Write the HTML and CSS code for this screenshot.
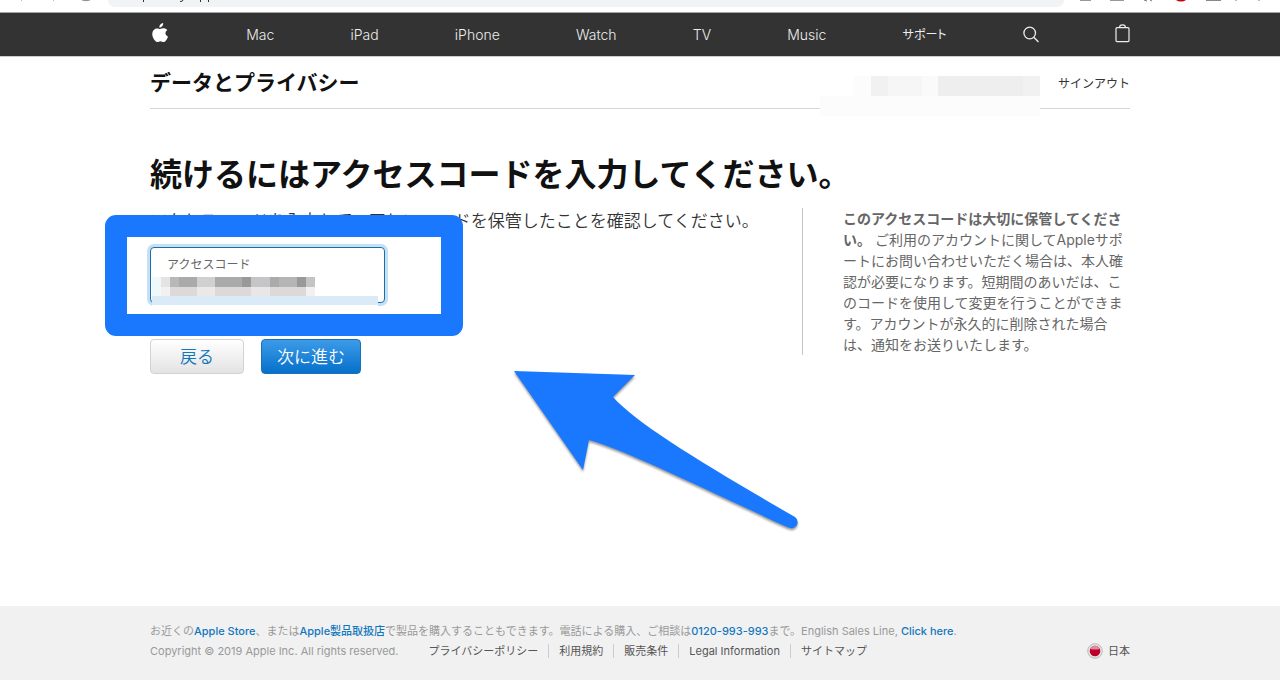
FILE: index.html
```html
<!DOCTYPE html>
<html lang="ja">
<head>
<meta charset="utf-8">
<meta name="viewport" content="width=device-width, initial-scale=1">
<title>データとプライバシー</title>
<link rel="stylesheet" href="styles.css">
</head>
<body>
<div class="browser-bar">
  <div class="browser-nav">
    <svg width="90" height="3" viewBox="0 0 90 3" aria-hidden="true"><path d="M21 0l1 1M54 0l-1 1" stroke="#bbb" fill="none"/><path d="M82 0q4 1.500 8 0" stroke="#888" fill="none"/></svg>
  </div>
  <div class="address">
    <svg width="110" height="4" viewBox="0 0 110 4" aria-hidden="true"><path d="M35.500 0v2M72 1.500q3 0 3-1.500M92.500 0v2M100.500 0v2" stroke="#333" fill="none"/></svg>
  </div>
  <div class="browser-tools">
    <svg width="200" height="4" viewBox="0 0 200 4" aria-hidden="true"><path d="M12 .5h11M42 .5h14" stroke="#999"/><path d="M76 0l3 1M82 0l2 1" stroke="#777"/><path d="M108 0h10q-2 1.500-5 1.500T108 0z" fill="#c00"/><path d="M138 .5h15" stroke="#888"/><path d="M168 0v1M191 0v1" stroke="#777"/></svg>
  </div>
</div>
<nav class="global-nav" aria-label="グローバル">
  <ul class="nav-list wrap">
    <li><a href="#" aria-label="Apple"><svg class="apple" width="20" height="44" viewBox="0 0 20 44"><path fill="#fff" d="M13.200 10q.2 1.900-1 3.200-1.100 1.400-2.900 1.400-.2-1.800 1-3.100Q11.500 10.200 13.200 10zM17.300 17q-2 1.200-1.900 3.300.1 2.500 2.600 3.500-.8 2.200-2.200 4-.9 1.300-2.200 1.300-.7 0-1.500-.4-1.700-.7-3.300 0-.8.400-1.500.4-1.200 0-2.400-1.600C2 24 1.600 20.100 3.300 17.500c1.500-2.200 3.800-2.500 5.600-1.700q.8.400 1.600 0C12.900 14.700 15.800 15.100 17.300 17z"/></svg></a></li>
    <li><a href="#">Mac</a></li>
    <li><a href="#">iPad</a></li>
    <li><a href="#">iPhone</a></li>
    <li><a href="#">Watch</a></li>
    <li><a href="#">TV</a></li>
    <li><a href="#">Music</a></li>
    <li><a href="#" class="support">サポート</a></li>
    <li><a href="#" aria-label="検索"><svg width="16" height="44" viewBox="0 0 16 44" fill="none" stroke="#eee" stroke-width="1.300"><circle cx="6.700" cy="20" r="5.800"/><path d="M10.800 24.200L15.500 29"/></svg></a></li>
    <li><a href="#" aria-label="ショッピングバッグ"><svg width="15" height="44" viewBox="0 0 15 44" fill="none" stroke="#eee" stroke-width="1.200"><rect x="1" y="14.600" width="13" height="14" rx="1"/><path d="M4.500 14.600Q4.500 11.800 7.500 11.800t3 2.800"/></svg></a></li>
  </ul>
</nav>
<header class="page-head wrap">
  <h2 class="page-title">データとプライバシー</h2>
  <a href="#" class="sign-out">サインアウト</a>
  <svg class="account-mask" width="220" height="40" viewBox="0 0 220 40" aria-hidden="true"><path fill="#fff" d="M0 0h220v40H0z"/><path fill="#fcfcfc" d="M34 0h186v40H0V20h34z"/><path fill="#f1f1f1" d="M51 0h17v20H51z"/><path fill="#f6f6f6" d="M68 0h34v20H68z"/><path fill="#fafafa" d="M102 0h16v20h-16z"/><path fill="#eee" d="M118 0h85v20h-85z"/><path fill="#f1f1f1" d="M203 0h17v20h-17z"/></svg>
</header>
<main class="content wrap">
  <h1 class="heading">続けるにはアクセスコードを入力してください。</h1>
  <div class="columns">
    <form class="code-form" onsubmit="return false">
      <p class="lead">アクセスコードを入力して、正しいコードを保管したことを確認してください。</p>
      <div class="field">
        <label for="code">アクセスコード</label>
        <input id="code" type="text" autocomplete="off">
        <svg class="code-mask" width="228" height="31" viewBox="0 0 228 31" aria-hidden="true" shape-rendering="crispEdges"><path fill="#fff" d="M0 0h226v31H0z"/><path fill="#eff8fb" d="M0 0h9v20H0z"/><path fill="#e4e4e4" d="M9 0h9v10H9z"/><path fill="#b8b8b8" d="M18 0h9v10h-9z"/><path fill="#aaa" d="M27 0h18v10H27z"/><path fill="#d0d0d0" d="M45 0h18v10H45z"/><path fill="#aaa" d="M63 0h27v10H63z"/><path fill="#999" d="M90 0h9v10h-9z"/><path fill="#c5c5c8" d="M99 0h19v10H99z"/><path fill="#aaa" d="M118 0h9v10h-9z"/><path fill="#b5b5b5" d="M127 0h18v10h-18z"/><path fill="#999" d="M145 0h9v10h-9z"/><path fill="#c4c4c4" d="M154 0h9v10h-9z"/><path fill="#f2f0f0" d="M9 10h9v9H9z"/><path fill="#dcd9d8" d="M18 10h27v9H18z"/><path fill="#ebe9e8" d="M45 10h18v9H45z"/><path fill="#dcd9d8" d="M63 10h36v9H63z"/><path fill="#e8e6e6" d="M99 10h19v9H99z"/><path fill="#dcd9d8" d="M118 10h36v9h-36z"/><path fill="#f2f0f0" d="M154 10h9v9h-9z"/><path fill="#daebf7" d="M0 19h226v9H0z"/></svg>
      </div>
      <div class="actions">
        <button type="button" class="btn btn-back">戻る</button>
        <button type="submit" class="btn btn-next">次に進む</button>
      </div>
    </form>
    <aside class="note"><strong>このアクセスコードは大切に保管してください。</strong> ご利用のアカウントに関してAppleサポートにお問い合わせいただく場合は、本人確認が必要になります。短期間のあいだは、このコードを使用して変更を行うことができます。アカウントが永久的に削除された場合は、通知をお送りいたします。</aside>
  </div>
  <div class="highlight" aria-hidden="true"></div>
  <svg class="arrow" width="290" height="164" viewBox="0 0 290 164" aria-hidden="true"><path fill="#1a78ff" d="M4 1L125 5 103 27C127 54 195 95 285 147Q289 150 287 155 284 160 277 157C198 121 118 81 79 70L73 100z"/></svg>
</main>
<footer class="site-footer">
  <div class="wrap">
    <p class="shop">お近くの<a href="#">Apple Store</a>、または<a href="#">Apple製品取扱店</a>で製品を購入することもできます。電話による購入、ご相談は<a href="#">0120-993-993</a>まで。English Sales Line, <a href="#">Click here</a>.</p>
    <div class="legal">
      <span class="copyright">Copyright © 2019 Apple Inc. All rights reserved.</span>
      <ul class="legal-links">
        <li><a href="#">プライバシーポリシー</a></li>
        <li><a href="#">利用規約</a></li>
        <li><a href="#">販売条件</a></li>
        <li><a href="#">Legal Information</a></li>
        <li><a href="#">サイトマップ</a></li>
      </ul>
      <a href="#" class="region"><svg width="16" height="16" viewBox="0 0 16 16" aria-hidden="true"><circle cx="8" cy="8" r="7.300" fill="#e4e4e4" stroke="#bbb"/><circle cx="8" cy="8" r="5.300" fill="#bd0029"/><path d="M3.200 6Q4.500 2.700 8 2.700T12.800 6Q8 7 3.200 6z" fill="#dd8b9a"/></svg>日本</a>
    </div>
  </div>
</footer>
</body>
</html>
```
FILE: styles.css
```css
* { box-sizing: border-box; }
body {
  margin: 0;
  min-height: 100vh;
  display: flex;
  flex-direction: column;
  background: #fff;
  color: #111;
  font-family: Inter, "Noto Sans CJK JP", sans-serif;
}
a { color: inherit; text-decoration: none; }
ul { list-style: none; margin: 0; padding: 0; }
svg { display: block; }
.wrap { width: 100%; max-width: 980px; margin: 0 auto; }

.browser-bar {
  display: grid;
  grid-template-columns: 108px 1fr 216px;
  height: 13px;
  border-bottom: 1px solid #a5a5a5;
}
.address { height: 7px; background: #f1f3f4; border-radius: 0 0 14px 14px; }
.browser-tools { padding-left: 4px; }

.global-nav { background: #333; border-bottom: 1px solid #ccc; }
.nav-list { display: flex; justify-content: space-between; align-items: center; height: 43px; }
.nav-list a { display: block; color: #eee; font-size: 14px; font-weight: 300; line-height: 43px; }
.nav-list .support { font-size: 12px; font-weight: 400; font-feature-settings: "palt"; }

.page-head {
  position: relative;
  display: flex;
  justify-content: space-between;
  align-items: center;
  height: 52px;
  border-bottom: 1px solid #d6d6d6;
}
.page-title { margin: 0; font-size: 21px; line-height: 32px; font-weight: 700; }
.sign-out { padding-top: 3px; font-size: 12px; line-height: 20px; color: #333; }
.account-mask { position: absolute; right: 90px; top: 19px; }

.content { position: relative; flex: 1; padding-top: 42px; }
.heading { margin: 0; font-size: 32px; line-height: 48px; font-weight: 700; }
.columns { display: flex; justify-content: space-between; align-items: flex-start; margin-top: 10px; }
.code-form { flex: 1; }
.lead { margin: 0; font-size: 17px; line-height: 24px; font-weight: 350; color: #333; }
.field {
  position: relative;
  width: 235px;
  height: 56px;
  margin-top: 14px;
}
.field label { position: absolute; left: 17px; top: 9px; font-size: 12px; line-height: 18px; color: #666; }
.field input {
  width: 100%;
  height: 100%;
  padding: 24px 16px 8px;
  border: 1px solid #1b6fa8;
  border-radius: 4px;
  background: #fff;
  box-shadow: 0 0 0 3px #c5e0f5;
  font: inherit;
  outline: none;
}
.code-mask { position: absolute; left: 2px; top: 30px; }
.actions { display: flex; gap: 17px; margin-top: 36px; }
.btn {
  height: 35px;
  padding: 0 16px;
  border: 1px solid #d2d2d2;
  border-radius: 4px;
  font: 350 17px/32px Inter, "Noto Sans CJK JP", sans-serif;
}
.btn-back { min-width: 94px; color: #1277bd; background: linear-gradient(#fff, #e3e3e3); }
.btn-next { min-width: 100px; color: #fff; border-color: #1872b8; background: linear-gradient(#3c9be8, #0670cb); padding: 0 15px; }
.note {
  width: 328px;
  margin-top: -1px;
  padding: 0 7px 0 40px;
  border-left: 1px solid #c4c4c4;
  font-size: 14px;
  line-height: 21px;
  color: #666;
}
.highlight {
  position: absolute;
  left: -45px;
  top: 106px;
  width: 358px;
  height: 121px;
  border: 22px solid #1a78ff;
  border-radius: 11px;
}
.arrow { position: absolute; left: 360px; top: 261px; overflow: visible; filter: drop-shadow(0 2px 1px #0006); }

.site-footer { padding: 15px 0 19px; margin-bottom: 1px; background: #f1f1f1; font-size: 11px; line-height: 20px; color: #999; }
.shop { margin: 0; }
.shop a { color: #1277bd; font-weight: 500; }
.legal { display: flex; align-items: center; color: #555; }
.copyright { color: #999; }
.legal-links { display: flex; align-items: center; margin-left: 30px; }
.legal-links li { line-height: 14px; }
.legal-links li + li { margin-left: 10px; padding-left: 10px; border-left: 1px solid #ccc; }
.region { display: flex; align-items: center; gap: 5px; margin-left: auto; }
```
